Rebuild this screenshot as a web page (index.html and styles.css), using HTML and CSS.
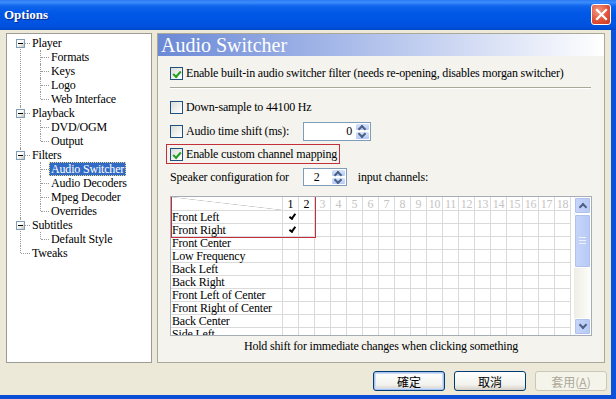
FILE: index.html
```html
<!DOCTYPE html>
<html lang="en">
<head>
    <meta charset="UTF-8">
    <title>Options</title>
    <link rel="stylesheet" href="styles.css">
</head>
<body>
<div class="window">
    <div class="titlebar">
        <span class="title">Options</span>
        <span class="close-btn">
            <svg width="13" height="13" viewBox="0 0 13 13"><path d="M2 2 L11 11 M11 2 L2 11" stroke="#fff" stroke-width="2.2" stroke-linecap="square"/></svg>
        </span>
    </div>

    <div class="frame">
        <div class="main">
            <!-- page tree -->
            <div class="tree-box">
                <ul class="tree">
                    <li>
                        <div class="row"><span class="toggle"></span><span class="label">Player</span></div>
                        <ul class="kids">
                            <li><span class="label">Formats</span></li>
                            <li><span class="label">Keys</span></li>
                            <li><span class="label">Logo</span></li>
                            <li><span class="label">Web Interface</span></li>
                        </ul>
                    </li>
                    <li>
                        <div class="row"><span class="toggle"></span><span class="label">Playback</span></div>
                        <ul class="kids">
                            <li><span class="label">DVD/OGM</span></li>
                            <li><span class="label">Output</span></li>
                        </ul>
                    </li>
                    <li>
                        <div class="row"><span class="toggle"></span><span class="label">Filters</span></div>
                        <ul class="kids">
                            <li><span class="label selected">Audio Switcher</span></li>
                            <li><span class="label">Audio Decoders</span></li>
                            <li><span class="label">Mpeg Decoder</span></li>
                            <li><span class="label">Overrides</span></li>
                        </ul>
                    </li>
                    <li>
                        <div class="row"><span class="toggle"></span><span class="label">Subtitles</span></div>
                        <ul class="kids">
                            <li><span class="label">Default Style</span></li>
                        </ul>
                    </li>
                    <li>
                        <div class="row leaf"><span class="label">Tweaks</span></div>
                    </li>
                </ul>
            </div>

            <!-- property page -->
            <div class="page">
                <div class="page-title">Audio Switcher</div>
                <div class="page-body">
                    <label class="check-row first">
                        <span class="checkbox checked"></span>
                        <span>Enable built-in audio switcher filter (needs re-opening, disables morgan switcher)</span>
                    </label>
                    <div class="separator"></div>
                    <label class="check-row">
                        <span class="checkbox"></span>
                        <span>Down-sample to 44100 Hz</span>
                    </label>
                    <div class="check-row spin-row">
                        <span class="checkbox"></span>
                        <span class="shift-label">Audio time shift (ms):</span>
                        <span class="spin wide">
                            <span class="spin-value">0</span>
                            <span class="spin-btns"><span class="spin-up"></span><span class="spin-down"></span></span>
                        </span>
                    </div>
                    <div class="check-row marked">
                        <span class="checkbox checked"></span>
                        <span>Enable custom channel mapping</span>
                    </div>
                    <div class="speaker-row">
                        <span>Speaker configuration for</span>
                        <span class="spin narrow">
                            <span class="spin-value">2</span>
                            <span class="spin-btns"><span class="spin-up"></span><span class="spin-down"></span></span>
                        </span>
                        <span>input channels:</span>
                    </div>

                    <div class="grid-box">
                        <div class="grid">
                            <div class="grid-head">
                                <span class="gname diag"></span>
                                <span class="num on">1</span><span class="num on">2</span><span class="num">3</span><span class="num">4</span><span class="num">5</span><span class="num">6</span><span class="num">7</span><span class="num">8</span><span class="num">9</span><span class="num">10</span><span class="num">11</span><span class="num">12</span><span class="num">13</span><span class="num">14</span><span class="num">15</span><span class="num">16</span><span class="num">17</span><span class="num">18</span>
                            </div>
                            <div class="grow"><span class="gname">Front Left</span><span class="gcells"><span class="tick"></span></span></div>
                            <div class="grow"><span class="gname">Front Right</span><span class="gcells"><span class="tick"></span></span></div>
                            <div class="grow"><span class="gname">Front Center</span><span class="gcells"></span></div>
                            <div class="grow"><span class="gname">Low Frequency</span><span class="gcells"></span></div>
                            <div class="grow"><span class="gname">Back Left</span><span class="gcells"></span></div>
                            <div class="grow"><span class="gname">Back Right</span><span class="gcells"></span></div>
                            <div class="grow"><span class="gname">Front Left of Center</span><span class="gcells"></span></div>
                            <div class="grow"><span class="gname">Front Right of Center</span><span class="gcells"></span></div>
                            <div class="grow"><span class="gname">Back Center</span><span class="gcells"></span></div>
                            <div class="grow"><span class="gname">Side Left</span><span class="gcells"></span></div>
                            <div class="grid-mark"></div>
                        </div>
                        <div class="vscroll">
                            <span class="sb-btn up"></span>
                            <span class="sb-thumb"></span>
                            <span class="sb-track"></span>
                            <span class="sb-btn down"></span>
                        </div>
                    </div>

                    <p class="hint">Hold shift for immediate changes when clicking something</p>
                </div>
            </div>
        </div>

        <div class="buttons">
            <button class="btn default">確定</button>
            <button class="btn">取消</button>
            <button class="btn" disabled>套用(<u>A</u>)</button>
        </div>
    </div>
</div>
</body>
</html>
```

FILE: styles.css
```css
* {
    box-sizing: border-box;
}

body {
    margin: 0;
    font-family: "Liberation Serif", "Noto Sans CJK TC", serif;
    font-size: 12px;
    letter-spacing: -0.18px;
    color: #000;
    background: #ECE9D8;
}

.window {
    width: 616px;
    height: 399px;
    display: flex;
    flex-direction: column;
}

/* XP title bar */
.titlebar {
    height: 30px;
    flex: none;
    display: flex;
    align-items: center;
    justify-content: space-between;
    padding: 0 5px 0 4px;
    background: linear-gradient(#2A7BF4, #3D8CFA 8%, #0F64EC 20%, #0058E6 45%, #0054E3 70%, #0051DD 90%, #0046C7);
}

.title {
    color: #fff;
    font-weight: bold;
    font-size: 13px;
    letter-spacing: 0;
    text-shadow: 1px 1px #0A2A8A;
}

.close-btn {
    width: 20px;
    height: 21px;
    margin-bottom: 2px;
    display: flex;
    align-items: center;
    justify-content: center;
    border: 1px solid #fff;
    border-radius: 3px;
    background: radial-gradient(circle at 35% 30%, #F09A82, #E0533A 55%, #C8381F);
}

.frame {
    flex: 1;
    display: flex;
    flex-direction: column;
    background: #ECE9D8;
    border-right: 5px solid #0A53DA;
    border-bottom: 4px solid #0A4FD6;
    padding: 3px 6px 0 6px;
}

.main {
    display: flex;
    gap: 5px;
    height: 330px;
}

/* tree */
.tree-box {
    width: 146px;
    flex: none;
    background: #fff;
    border: 1px solid #9C9B96;
    padding-top: 2px;
}

.tree,
.kids {
    list-style: none;
    margin: 0;
    padding: 0;
}

.tree > li,
.kids > li {
    position: relative;
}

.row,
.kids > li {
    height: 14px;
    display: flex;
    align-items: center;
}

.row {
    padding-left: 9px;
}

.row.leaf {
    padding-left: 23px;
}

.kids > li {
    padding-left: 42px;
}

.tree > li::before {
    content: "";
    position: absolute;
    left: 13px;
    top: 0;
    bottom: 0;
    border-left: 1px dotted #9A9A9A;
}

.tree > li:first-child::before {
    top: 7px;
}

.tree > li:last-child::before {
    bottom: auto;
    height: 7px;
}

.row::after {
    content: "";
    position: absolute;
    left: 14px;
    top: 7px;
    width: 9px;
    border-top: 1px dotted #9A9A9A;
}

.kids > li::before {
    content: "";
    position: absolute;
    left: 33px;
    top: 0;
    bottom: 0;
    border-left: 1px dotted #9A9A9A;
}

.kids > li:last-child::before {
    bottom: auto;
    height: 7px;
}

.kids > li::after {
    content: "";
    position: absolute;
    left: 34px;
    top: 7px;
    width: 8px;
    border-top: 1px dotted #9A9A9A;
}

.toggle {
    position: relative;
    z-index: 1;
    width: 9px;
    height: 9px;
    margin-right: 5px;
    border: 1px solid #7F9DB9;
    background: linear-gradient(135deg, #fff 40%, #C6C2B2);
}

.toggle::after {
    content: "";
    position: absolute;
    left: 1px;
    top: 3px;
    width: 5px;
    border-top: 1px solid #000;
}

.label {
    position: relative;
    z-index: 1;
    padding: 0 2px;
    line-height: 14px;
    white-space: nowrap;
    background: #fff;
}

.label.selected {
    background: #316AC5;
    color: #fff;
    outline: 1px dotted #E8D68A;
    outline-offset: -1px;
}

/* property page */
.page {
    flex: 1;
    display: flex;
    flex-direction: column;
    border: 1px solid #ACA899;
    background: #F4F3EE;
}

.page-title {
    height: 22px;
    padding-left: 3px;
    color: #fff;
    font-size: 20px;
    letter-spacing: 0;
    line-height: 23px;
    background: linear-gradient(to right, #6A89D6, #A5B8E8 40%, #fff);
}

.page-body {
    display: flex;
    flex-direction: column;
    align-items: flex-start;
    padding: 0 12px 0 12px;
}

.check-row {
    display: flex;
    align-items: center;
    gap: 3px;
    height: 16px;
    margin-top: 6px;
    white-space: nowrap;
}

.check-row.first {
    margin-top: 9px;
}

.separator {
    align-self: stretch;
    margin: 6px 1px 4px 0;
    border-top: 1px solid #ACA899;
    border-bottom: 1px solid #fff;
}

.checkbox {
    position: relative;
    width: 13px;
    height: 13px;
    flex: none;
    border: 1px solid #1C5180;
    background: linear-gradient(135deg, #DCDCD7, #fff);
}

.checkbox.checked::after {
    content: "";
    position: absolute;
    left: 2px;
    top: 1px;
    width: 6px;
    height: 3px;
    border-left: 2px solid #21A121;
    border-bottom: 2px solid #21A121;
    transform: translate(0, 2px) rotate(-48deg);
}

.spin-row {
    height: 20px;
}

.shift-label {
    width: 114px;
}

.spin {
    display: flex;
    height: 19px;
    border: 1px solid #7F9DB9;
    background: #fff;
}

.spin.wide {
    width: 68px;
}

.spin.narrow {
    width: 44px;
    height: 18px;
    margin: 0 11px 0 14px;
}

.spin-value {
    flex: 1;
    text-align: right;
    padding-right: 3px;
    line-height: 17px;
}

.spin.narrow .spin-value {
    text-align: left;
    padding-left: 10px;
}

.spin-btns {
    width: 15px;
    display: flex;
    flex-direction: column;
}

.spin-up,
.spin-down {
    position: relative;
    flex: 1;
    border: 1px solid #fff;
    border-radius: 2px;
    background: linear-gradient(#D8E4FC, #B4C8F6);
}

.spin-up::after,
.spin-down::after {
    content: "";
    position: absolute;
    left: 3px;
    top: 2px;
    width: 4px;
    height: 4px;
    border-left: 2px solid #4D6185;
    border-top: 2px solid #4D6185;
    transform: rotate(45deg);
}

.spin-down::after {
    top: -1px;
    transform: rotate(225deg);
}

.check-row.marked {
    height: 20px;
    margin: 3px 0 0 -4px;
    padding: 0 2px 0 3px;
    border: 1px solid #C2303C;
}

.speaker-row {
    display: flex;
    align-items: center;
    height: 20px;
    margin-top: 3px;
    white-space: nowrap;
}

/* channel grid */
.grid-box {
    display: flex;
    justify-content: space-between;
    width: 422px;
    height: 140px;
    margin-top: 9px;
    border: 1px solid #A5ACB5;
    background: #fff;
}

.grid {
    position: relative;
    width: 400px;
    overflow: hidden;
}

.grid-head,
.grow {
    display: flex;
    border-bottom: 1px solid #DADADA;
}

.grid-head {
    height: 14px;
}

.grow {
    height: 13px;
}

.gname {
    width: 112px;
    flex: none;
    padding-left: 1px;
    line-height: 13px;
    white-space: nowrap;
    border-right: 1px solid #DADADA;
}

.gname.diag {
    background: linear-gradient(to top right, transparent calc(50% - 0.6px), #C8C8C8, transparent calc(50% + 0.6px));
}

.num {
    width: 16px;
    flex: none;
    text-align: center;
    line-height: 14px;
    color: #C4C4C4;
    border-right: 1px solid #DADADA;
}

.num.on {
    color: #000;
}

.gcells {
    flex: 1;
    background: repeating-linear-gradient(to right, transparent 0 15px, #DADADA 15px 16px);
}

.tick {
    display: block;
    width: 16px;
    height: 12px;
    position: relative;
}

.tick::after {
    content: "";
    position: absolute;
    left: 6px;
    top: 3px;
    width: 5px;
    height: 2px;
    border-left: 2px solid #000;
    border-bottom: 2px solid #000;
    transform: rotate(-55deg);
}

.grid-mark {
    position: absolute;
    left: 0;
    top: -1px;
    width: 145px;
    height: 42px;
    border: 1px solid #C2303C;
}

.vscroll {
    width: 17px;
    display: flex;
    flex-direction: column;
    background: linear-gradient(to right, #EEEDE5, #FDFDFA);
}

.sb-btn,
.sb-thumb {
    border: 1px solid #fff;
    border-radius: 2px;
    background: linear-gradient(to right, #C6D5FB, #B7CAF5);
    box-shadow: 0 0 0 1px #B0C2EC inset;
}

.sb-btn {
    position: relative;
    height: 17px;
}

.sb-btn::after {
    content: "";
    position: absolute;
    left: 5px;
    top: 6px;
    width: 4px;
    height: 4px;
    border-left: 2px solid #4D6185;
    border-top: 2px solid #4D6185;
    transform: rotate(45deg);
}

.sb-btn.down::after {
    top: 3px;
    transform: rotate(225deg);
}

.sb-thumb {
    height: 54px;
    background: linear-gradient(#EEF3FE, #EEF3FE) 4px 22px / 7px 1px no-repeat,
        linear-gradient(#EEF3FE, #EEF3FE) 4px 25px / 7px 1px no-repeat,
        linear-gradient(#EEF3FE, #EEF3FE) 4px 28px / 7px 1px no-repeat,
        linear-gradient(to right, #C6D5FB, #B7CAF5);
}

.sb-track {
    flex: 1;
}

.hint {
    align-self: stretch;
    margin: 3px 0 0;
    text-align: center;
    line-height: 14px;
}

/* dialog buttons */
.buttons {
    display: flex;
    justify-content: flex-end;
    gap: 9px;
    margin: 8px -2px 0 0;
}

.btn {
    width: 72px;
    height: 20px;
    padding: 0;
    font-family: "Noto Sans CJK TC", sans-serif;
    font-size: 12px;
    letter-spacing: 0;
    color: #000;
    border: 1px solid #003C74;
    border-radius: 3px;
    background: linear-gradient(#FFFFFF, #F2F2EE 70%, #D6D0C5);
}

.btn.default {
    box-shadow: 0 0 0 1px #A9C3F0 inset, 0 0 0 2px #CEDCF8 inset;
}

.btn:disabled {
    color: #ACA899;
    border-color: #C9C7BA;
    background: #F5F4EA;
}
```
